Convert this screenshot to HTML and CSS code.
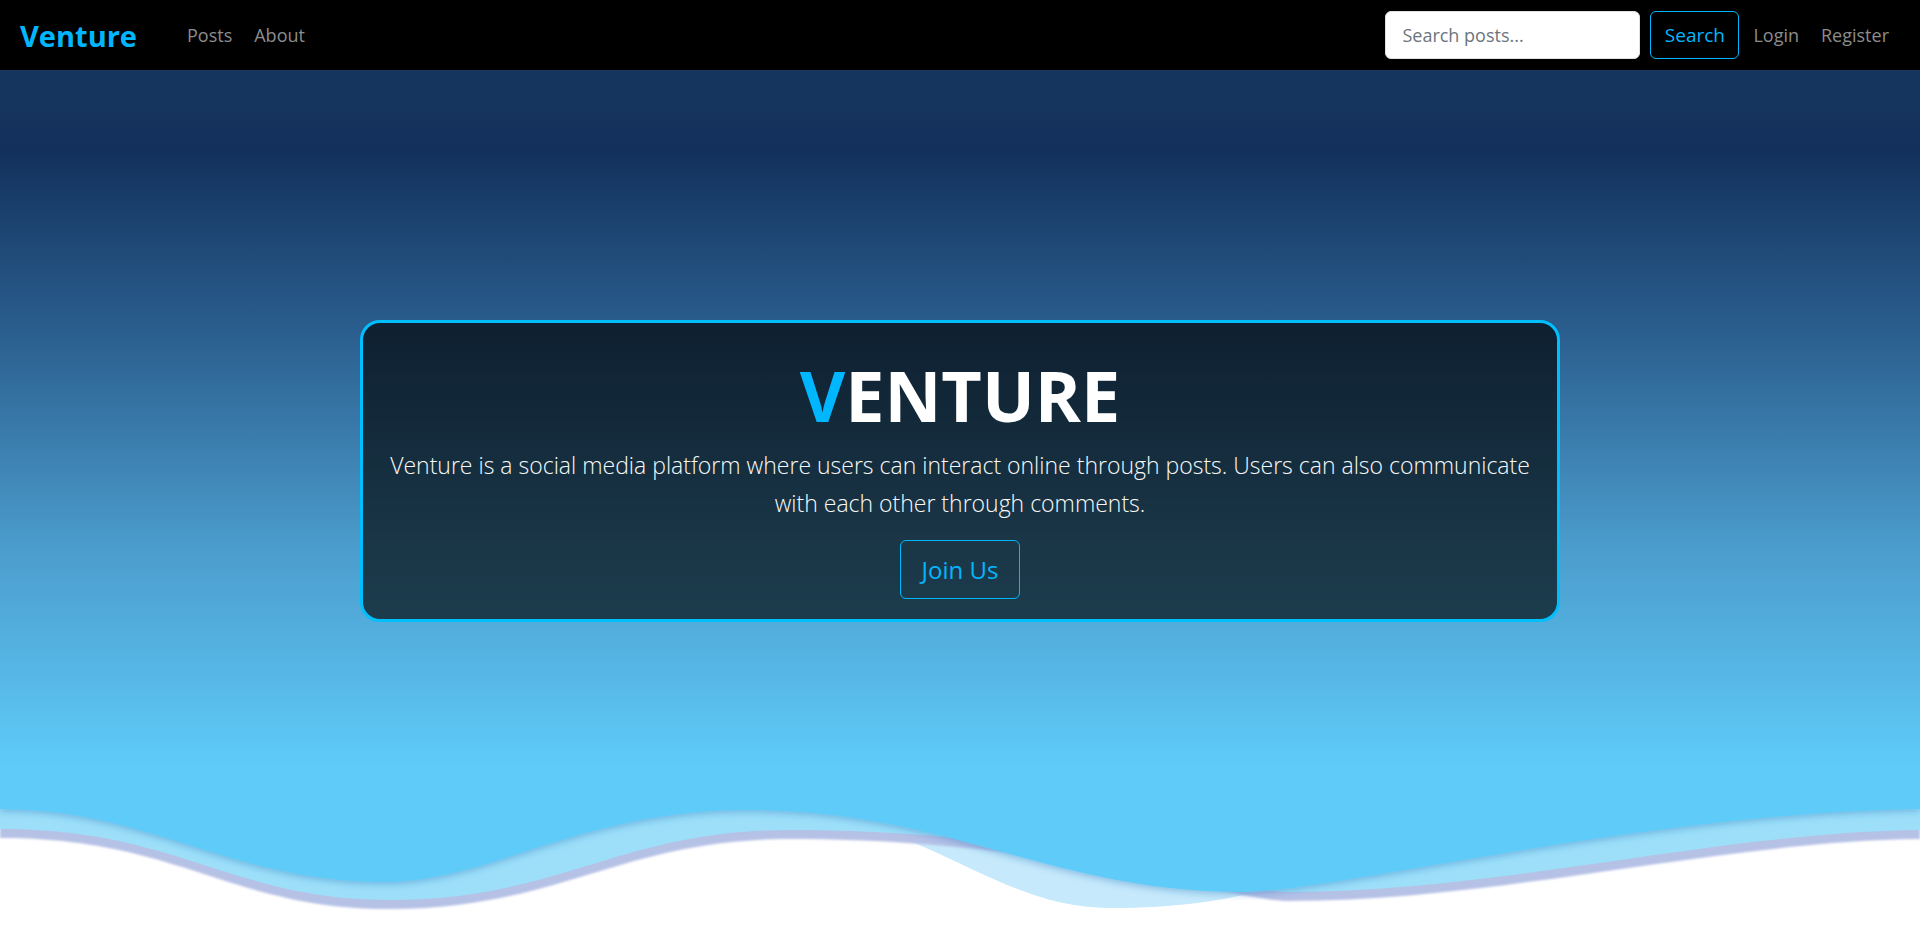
FILE: index.html
```html
<!DOCTYPE html>
<html lang="en">

<head>
    <meta charset="UTF-8">
    <meta name="viewport" content="width=device-width, initial-scale=1.0">
    <title>Venture</title>
    <link rel="stylesheet" href="styles.css">
</head>

<body>
    <!-- top navigation -->
    <nav class="navbar">
        <div class="nav-left">
            <a href="#" class="brand">Venture</a>
            <ul class="nav-links">
                <li><a href="#">Posts</a></li>
                <li><a href="#">About</a></li>
            </ul>
        </div>
        <div class="nav-right">
            <form class="search-form">
                <input type="text" class="search-input" placeholder="Search posts...">
                <button type="button" class="btn-search">Search</button>
            </form>
            <ul class="nav-links">
                <li><a href="#">Login</a></li>
                <li><a href="#">Register</a></li>
            </ul>
        </div>
    </nav>

    <!-- hero -->
    <section class="hero">
        <div class="hero-card">
            <h1 class="hero-title"><span class="accent">V</span>ENTURE</h1>
            <p class="hero-text">Venture is a social media platform where users can interact online through posts. Users can also communicate with each other through comments.</p>
            <a href="#" class="btn-join">Join Us</a>
        </div>

        <svg class="waves" viewBox="0 0 1920 162" preserveAspectRatio="none">
            <defs>
                <filter id="wave-shadow" x="-5%" y="-20%" width="110%" height="160%">
                    <feDropShadow dx="0" dy="3" stdDeviation="3" flood-color="#2f78c0" flood-opacity="0.35" />
                </filter>
                <filter id="band-soft" x="-5%" y="-20%" width="110%" height="160%">
                    <feGaussianBlur stdDeviation="1.2" />
                </filter>
            </defs>
            <rect width="1920" height="162" fill="#fff" />
            <path fill="#c6e9fb" d="M0,0 V40 L820,40 C930,45 1000,128 1110,128 C1190,128 1240,118 1300,100 L1920,40 V0 Z" />
            <path fill="#b6c1e6" filter="url(#band-soft)" transform="translate(0 9)" d="M0,-9 V49 C180,49 230,120 390,120 C560,120 620,50 790,50 C1060,50 1230,112 1290,112 C1500,112 1720,52 1920,50 V-9 Z" />
            <path fill="#9ddff9" d="M0,0 V49 C180,49 230,120 390,120 C560,120 620,50 790,50 C1060,50 1230,112 1290,112 C1500,112 1720,52 1920,50 V0 Z" />
            <path fill="#5fcbf9" filter="url(#wave-shadow)" d="M0,0 V29 C150,29 230,102 385,102 C490,102 580,30 747,30 C950,30 1050,112 1243,112 C1330,112 1650,32 1920,29 V0 Z" />
        </svg>
    </section>
</body>

</html>
```

FILE: styles.css
```css
body {
    margin: 0;
    padding: 0;
    font-family: "Open Sans", "Noto Sans", sans-serif;
    background-color: #fff;
    overflow: hidden;
}

a {
    text-decoration: none;
}

/* navbar */
.navbar {
    display: flex;
    align-items: center;
    justify-content: space-between;
    height: 70px;
    padding: 0 21px 0 20px;
    background-color: #000;
}

.nav-left,
.nav-right {
    display: flex;
    align-items: center;
}

.brand {
    margin-right: 40px;
    font-size: 29px;
    font-weight: 700;
    color: #00b7ff;
}

.nav-links {
    display: flex;
    margin: 0;
    padding: 0;
    list-style: none;
}

.nav-links a {
    display: block;
    padding: 8px 10px;
    font-size: 18px;
    color: #8c8c8c;
}

.nav-links li + li a {
    padding-left: 12px;
}

.search-form {
    display: flex;
    align-items: center;
    gap: 10px;
    margin-right: 4px;
}

.search-input {
    box-sizing: border-box;
    width: 255px;
    height: 48px;
    padding: 0 16px;
    border: 1px solid #dee2e6;
    border-radius: 6px;
    font-family: inherit;
    font-size: 18px;
    color: #212529;
    background-color: #fff;
}

.search-input::placeholder {
    color: #6c757d;
}

.btn-search {
    box-sizing: border-box;
    width: 89px;
    height: 48px;
    padding: 0;
    border: 1px solid #00b7ff;
    border-radius: 6px;
    font-family: inherit;
    font-size: 19px;
    color: #00b7ff;
    background: transparent;
}

/* hero */
.hero {
    position: relative;
    height: 872px;
    padding-top: 250px;
    box-sizing: border-box;
    background: linear-gradient(to bottom,
            #163660 0%,
            #12305b 9%,
            #2a5e8e 30%,
            #4b9dcd 55%,
            #5fcbf9 80%,
            #5fcbf9 100%);
}

.hero-card {
    box-sizing: border-box;
    width: 1200px;
    margin: 0 auto;
    padding: 30px 20px 20px;
    border: 3px solid #00bfff;
    border-radius: 20px;
    background-color: rgba(0, 0, 0, 0.65);
    text-align: center;
}

.hero-title {
    margin: 0 0 10px;
    font-size: 70px;
    font-weight: 700;
    line-height: 84px;
    color: #fff;
}

.hero-title .accent {
    color: #00b7ff;
}

.hero-text {
    margin: 0 0 18px;
    font-size: 23px;
    font-weight: 300;
    line-height: 37.5px;
    color: #f8f9fa;
}

.btn-join {
    display: inline-block;
    box-sizing: border-box;
    height: 59px;
    padding: 0 21px;
    border: 1px solid #00b7ff;
    border-radius: 6px;
    font-size: 24px;
    line-height: 57px;
    color: #00b7ff;
}

.waves {
    position: absolute;
    left: 0;
    bottom: 0;
    width: 100%;
    height: 162px;
    display: block;
}
```
